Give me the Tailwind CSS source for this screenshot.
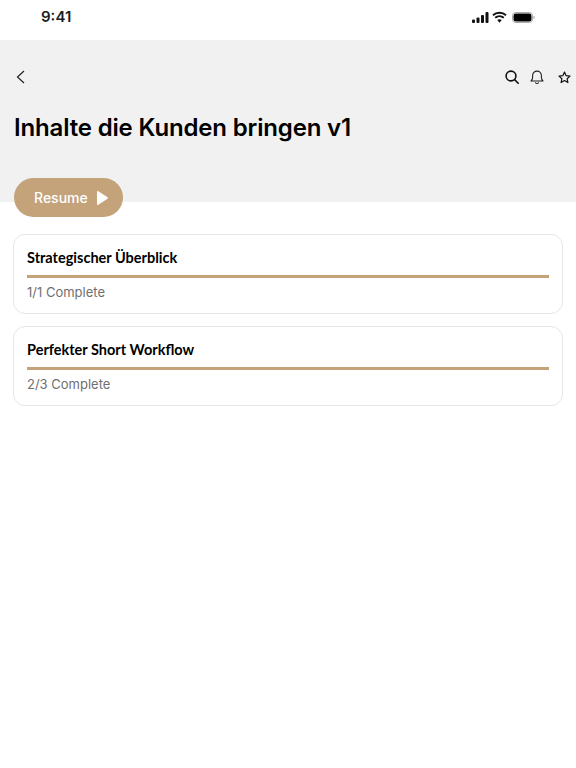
<!DOCTYPE html>
<html lang="de">
<head>
<meta charset="utf-8">
<script src="https://cdn.jsdelivr.net/npm/@tailwindcss/browser@4"></script>
</head>
<body class="bg-white font-['Inter',sans-serif] w-[576px] h-[768px] overflow-hidden">
<div class="h-[40px] flex items-center justify-between pl-[41px] pr-[41px] pb-[8px]">
  <span class="text-[15px] font-semibold text-[#1c1c1e] leading-none">9:41</span>
  <div class="flex items-center gap-[3px] mt-[2px]">
    <svg width="17" height="11" viewBox="0 0 17 11" fill="#111"><rect x="0" y="7.5" width="3" height="3.500" rx="1"/><rect x="4.500" y="5.500" width="3" height="5.500" rx="1"/><rect x="9" y="3" width="3" height="8" rx="1"/><rect x="13.500" y="0" width="3" height="11" rx="1"/></svg>
    <svg width="15" height="12" viewBox="0 0 16 12" fill="none" stroke="#111" stroke-width="2"><path d="M1 4.200C5 .6 11 .6 15 4.200"/><path d="M3.400 6.800C6 4.600 10 4.600 12.600 6.800"/><path d="M8 12 5.600 9.300C7 8.200 9 8.200 10.400 9.300Z" fill="#111" stroke="none"/></svg>
    <svg width="23" height="11" viewBox="0 0 23 11" class="ml-[2px]"><rect x=".5" y=".5" width="20" height="10" rx="3" fill="none" stroke="#aaa"/><rect x="1.500" y="1.500" width="18" height="8" rx="2.200" fill="#000"/><path d="M21.500 3.700c.8.300 1.300 1 1.300 1.800s-.5 1.500-1.300 1.800Z" fill="#aaa"/></svg>
  </div>
</div>
<header class="h-[162px] bg-[#f1f1f1] relative px-[14px]">
  <div class="h-[74px] mb-[1px] flex items-center justify-between">
    <svg width="14" height="14" viewBox="0 0 14 14" fill="none" stroke="#222" stroke-width="1.200"><path d="M10 1 3.500 7 10 13"/></svg>
    <div class="flex items-center gap-[11px] -mr-[8px]">
      <svg width="14" height="14" viewBox="0 0 14 14" fill="none" stroke="#111" stroke-width="1.600"><circle cx="6" cy="6" r="4.900"/><path d="m9.600 9.600 3.600 3.600" stroke-linecap="round"/></svg>
      <svg width="14" height="15" viewBox="0 0 14 15" fill="none" stroke="#222" stroke-width="1.100"><path d="M1 11c1-1 1.600-1.800 1.600-3.500V5.500a4.400 4.400 0 0 1 8.800 0v2c0 1.700.6 2.500 1.600 3.500Z" stroke-linejoin="round"/><path d="M5.500 12.800c.7 1 2.300 1 3 0" stroke-linecap="round"/></svg>
      <svg width="13" height="13" viewBox="0 0 24 24" fill="none" stroke="#111" stroke-width="2.200" stroke-linejoin="round" class="ml-[3px] -mr-[1px]"><path d="m12 2 3 6.600 7.200.8-5.400 4.800 1.500 7.100L12 17.700l-6.300 3.600 1.500-7.100L1.800 9.400 9 8.600Z"/></svg>
    </div>
  </div>
  <h1 class="text-[24px] leading-[26px] font-semibold text-black tracking-[-0.16px] whitespace-nowrap">Inhalte die Kunden bringen v1</h1>
  <button class="absolute left-[14px] top-[138px] w-[109px] h-[39px] rounded-full bg-[#c4a27a] text-white flex items-center pl-[20px] gap-[9px] text-[14px] font-medium"><span>Resume</span>
    <svg width="11" height="14" viewBox="0 0 11 14" fill="#fff"><path d="M0 1v12c0 .8.7 1.100 1.300.7l9.200-6c.5-.3.5-1 0-1.400L1.300.3C.7-.1 0 .2 0 1Z"/></svg>
  </button>
</header>
<main class="px-[13px] pt-[32px] flex flex-col gap-[12px]">
  <section class="h-[80px] rounded-[12px] border border-[#e6e6e6] px-[13px] pt-[13px]">
    <h2 class="font-['Lato',sans-serif] text-[14.5px] leading-[20px] font-bold text-black">Strategischer Überblick</h2>
    <div class="h-[3px] bg-[#c4a27a] mt-[7px]"></div>
    <p class="text-[13px] leading-[16px] text-[#707070] mt-[6px]">1/1 Complete</p>
  </section>
  <section class="h-[80px] rounded-[12px] border border-[#e6e6e6] px-[13px] pt-[13px]">
    <h2 class="font-['Lato',sans-serif] text-[14.5px] leading-[20px] font-bold text-black">Perfekter Short Workflow</h2>
    <div class="h-[3px] bg-[#c4a27a] mt-[7px]"></div>
    <p class="text-[13px] leading-[16px] text-[#707070] mt-[6px]">2/3 Complete</p>
  </section>
</main>
</body>
</html>
